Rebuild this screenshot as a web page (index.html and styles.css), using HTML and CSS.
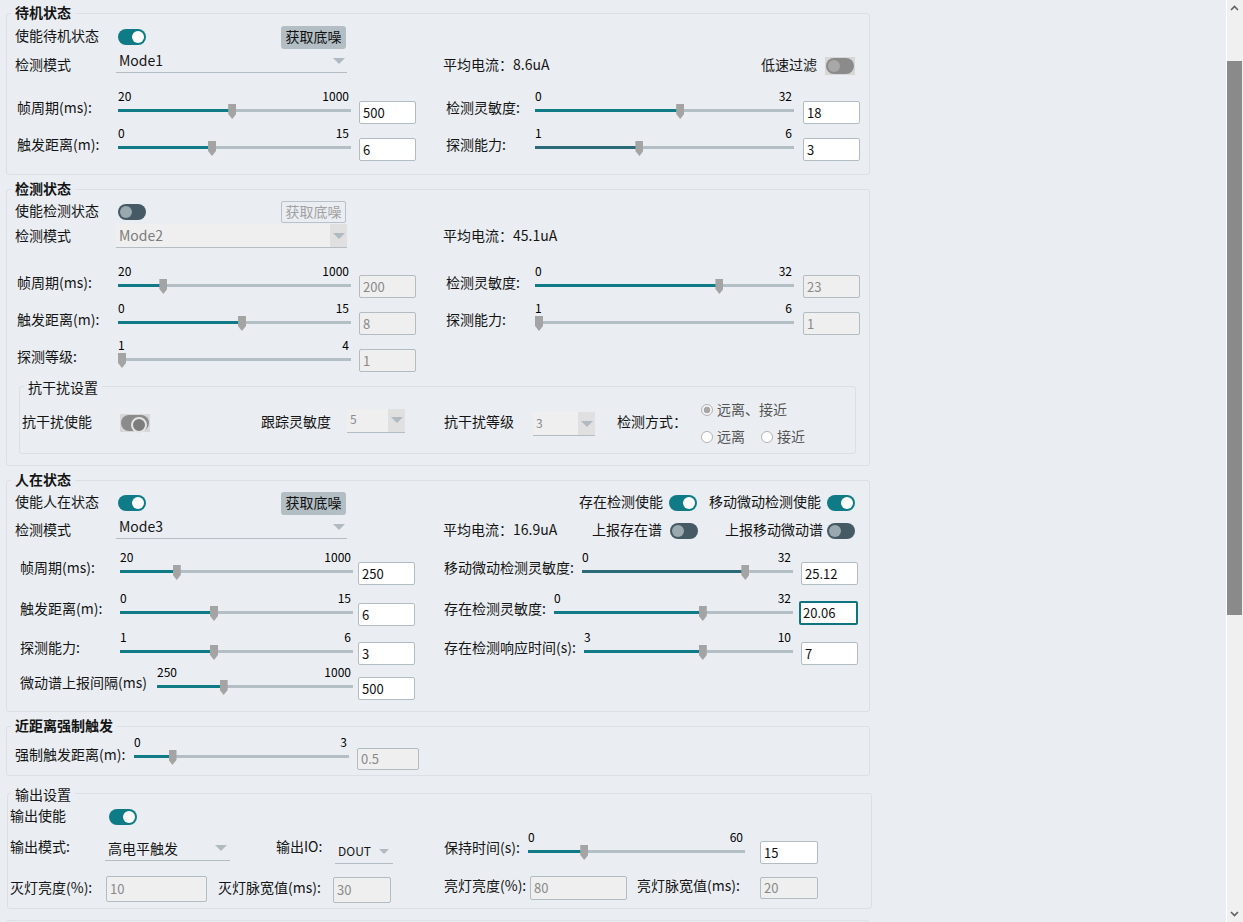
FILE: index.html
```html
<!DOCTYPE html>
<html lang="zh">
<head>
<meta charset="utf-8">
<title>设置</title>
<link rel="stylesheet" href="styles.css">
</head>
<body>
<div class="app">
<main class="content">

<section class="grp std g1">
  <h3 class="gt">待机状态</h3>
  <div class="row ra">
    <div class="lbl">使能待机状态</div>
    <div class="ctl"><span class="tgl"></span><button class="btn">获取底噪</button></div>
  </div>
  <div class="row rb">
    <div class="lbl">检测模式</div>
    <div class="combo"><span>Mode1</span><i class="arr"></i></div>
    <div class="right">
      <span>平均电流：8.6uA</span>
      <span class="push">低速过滤</span>
      <span class="tgl gray lowf"></span>
    </div>
  </div>
  <div class="row rs">
    <div class="lbl">帧周期(ms):</div>
    <div class="sl sw-l" style="--p:0.4898"><div class="tk"><span>20</span><span>1000</span></div><div class="tr"><i class="fl"></i><i class="th"></i></div></div>
    <input class="num" value="500">
    <div class="lbl2">检测灵敏度:</div>
    <div class="sl sw-r" style="--p:0.5625"><div class="tk"><span>0</span><span>32</span></div><div class="tr"><i class="fl"></i><i class="th"></i></div></div>
    <input class="num n2" value="18">
  </div>
  <div class="row rs">
    <div class="lbl">触发距离(m):</div>
    <div class="sl sw-l" style="--p:0.4"><div class="tk"><span>0</span><span>15</span></div><div class="tr"><i class="fl"></i><i class="th"></i></div></div>
    <input class="num" value="6">
    <div class="lbl2">探测能力:</div>
    <div class="sl sw-r dk" style="--p:0.4"><div class="tk"><span>1</span><span>6</span></div><div class="tr"><i class="fl"></i><i class="th"></i></div></div>
    <input class="num n2" value="3">
  </div>
</section>

<section class="grp std g2">
  <h3 class="gt">检测状态</h3>
  <div class="row ra">
    <div class="lbl">使能检测状态</div>
    <div class="ctl"><span class="tgl off"></span><button class="btn dis">获取底噪</button></div>
  </div>
  <div class="row rb">
    <div class="lbl">检测模式</div>
    <div class="combo dis"><span>Mode2</span><i class="abox"><i class="arr"></i></i></div>
    <div class="right"><span>平均电流：45.1uA</span></div>
  </div>
  <div class="row rs">
    <div class="lbl">帧周期(ms):</div>
    <div class="sl sw-l" style="--p:0.1837"><div class="tk"><span>20</span><span>1000</span></div><div class="tr"><i class="fl"></i><i class="th"></i></div></div>
    <input class="num dis" value="200" disabled>
    <div class="lbl2">检测灵敏度:</div>
    <div class="sl sw-r" style="--p:0.71875"><div class="tk"><span>0</span><span>32</span></div><div class="tr"><i class="fl"></i><i class="th"></i></div></div>
    <input class="num n2 dis" value="23" disabled>
  </div>
  <div class="row rs">
    <div class="lbl">触发距离(m):</div>
    <div class="sl sw-l" style="--p:0.5333"><div class="tk"><span>0</span><span>15</span></div><div class="tr"><i class="fl"></i><i class="th"></i></div></div>
    <input class="num dis" value="8" disabled>
    <div class="lbl2">探测能力:</div>
    <div class="sl sw-r" style="--p:0"><div class="tk"><span>1</span><span>6</span></div><div class="tr"><i class="fl"></i><i class="th"></i></div></div>
    <input class="num n2 dis" value="1" disabled>
  </div>
  <div class="row rs">
    <div class="lbl">探测等级:</div>
    <div class="sl sw-l" style="--p:0"><div class="tk"><span>1</span><span>4</span></div><div class="tr"><i class="fl"></i><i class="th"></i></div></div>
    <input class="num dis" value="1" disabled>
  </div>

  <div class="inner">
    <h4 class="gt light">抗干扰设置</h4>
    <div class="irow">
      <div class="it ilbl">抗干扰使能</div>
      <div><span class="tgl gray onr"></span></div>
      <div class="it">跟踪灵敏度</div>
      <div><div class="icombo c5"><span>5</span><i class="abox"><i class="arr"></i></i></div></div>
      <div class="it">抗干扰等级</div>
      <div><div class="icombo c3"><span>3</span><i class="abox"><i class="arr"></i></i></div></div>
      <div class="it">检测方式：</div>
      <div class="radios">
        <div class="rl"><i class="rd on"></i><span>远离、接近</span></div>
        <div class="rl"><i class="rd"></i><span>远离</span><i class="rd sp"></i><span>接近</span></div>
      </div>
    </div>
  </div>
</section>

<section class="grp g3">
  <h3 class="gt">人在状态</h3>
  <div class="row ra">
    <div class="lbl">使能人在状态</div>
    <div class="ctl"><span class="tgl"></span><button class="btn">获取底噪</button></div>
    <div class="right3">
      <span>存在检测使能</span><span class="tgl"></span>
      <span class="gap12">移动微动检测使能</span><span class="tgl"></span>
    </div>
  </div>
  <div class="row rb">
    <div class="lbl">检测模式</div>
    <div class="combo"><span>Mode3</span><i class="arr"></i></div>
    <div class="right">
      <span>平均电流：16.9uA</span>
      <span class="push">上报存在谱</span><span class="tgl off t8"></span>
      <span class="gap27">上报移动微动谱</span><span class="tgl off t4"></span>
    </div>
  </div>
  <div class="row rs rc">
    <div class="lbl lw">帧周期(ms):</div>
    <div class="sl sw-l" style="--p:0.2347"><div class="tk"><span>20</span><span>1000</span></div><div class="tr"><i class="fl"></i><i class="th"></i></div></div>
    <input class="num" value="250">
    <div class="rcell"><span class="rl">移动微动检测灵敏度:</span>
      <div class="sl dk" style="--p:0.785"><div class="tk"><span>0</span><span>32</span></div><div class="tr"><i class="fl"></i><i class="th"></i></div></div></div>
    <input class="num" value="25.12">
  </div>
  <div class="row rs rd2">
    <div class="lbl lw">触发距离(m):</div>
    <div class="sl sw-l" style="--p:0.4"><div class="tk"><span>0</span><span>15</span></div><div class="tr"><i class="fl"></i><i class="th"></i></div></div>
    <input class="num" value="6">
    <div class="rcell"><span class="rl">存在检测灵敏度:</span>
      <div class="sl" style="--p:0.6269"><div class="tk"><span>0</span><span>32</span></div><div class="tr"><i class="fl"></i><i class="th"></i></div></div></div>
    <input class="num focus" value="20.06">
  </div>
  <div class="row rs re">
    <div class="lbl lw">探测能力:</div>
    <div class="sl sw-l" style="--p:0.4"><div class="tk"><span>1</span><span>6</span></div><div class="tr"><i class="fl"></i><i class="th"></i></div></div>
    <input class="num" value="3">
    <div class="rcell"><span class="rl">存在检测响应时间(s):</span>
      <div class="sl" style="--p:0.5714"><div class="tk"><span>3</span><span>10</span></div><div class="tr"><i class="fl"></i><i class="th"></i></div></div></div>
    <input class="num" value="7">
  </div>
  <div class="row rs rf">
    <div class="lbl lwide">微动谱上报间隔(ms)</div>
    <div class="sl sw-f" style="--p:0.3333"><div class="tk"><span>250</span><span>1000</span></div><div class="tr"><i class="fl"></i><i class="th"></i></div></div>
    <input class="num" value="500">
  </div>
</section>

<section class="grp g4">
  <h3 class="gt">近距离强制触发</h3>
  <div class="row rs">
    <div class="lbl">强制触发距离(m):</div>
    <div class="sl sw-g" style="--p:0.1667"><div class="tk"><span>0</span><span>3</span></div><div class="tr"><i class="fl"></i><i class="th"></i></div></div>
    <input class="num dis" value="0.5" disabled>
  </div>
</section>

<section class="grp g5">
  <h3 class="gt light">输出设置</h3>
  <div class="row ra">
    <div class="lbl">输出使能</div>
    <span class="tgl"></span>
  </div>
  <div class="row rs rb5">
    <div class="lbl">输出模式:</div>
    <div class="combo cm"><span>高电平触发</span><i class="arr"></i></div>
    <div class="olbl">输出IO:</div>
    <div class="combo cio"><span>DOUT</span><i class="arr"></i></div>
    <div class="hlbl">保持时间(s):</div>
    <div class="sl sw-h" style="--p:0.25"><div class="tk"><span>0</span><span>60</span></div><div class="tr"><i class="fl"></i><i class="th"></i></div></div>
    <input class="num nh" value="15">
  </div>
  <div class="row rs rc5">
    <div class="lbl">灭灯亮度(%):</div>
    <input class="num dis i1" value="10" disabled>
    <div class="l2">灭灯脉宽值(ms):</div>
    <input class="num dis i2" value="30" disabled>
    <div class="l3">亮灯亮度(%):</div>
    <input class="num dis i3" value="80" disabled>
    <div class="l4">亮灯脉宽值(ms):</div>
    <input class="num dis i4" value="20" disabled>
  </div>
</section>

<section class="grp g6"></section>

</main>
<aside class="scroll">
  <div class="sbtn"><svg width="16" height="17" viewBox="0 0 16 17"><polyline points="4,10 7.5,6.5 11,10" fill="none" stroke="#606060" stroke-width="1.6"/></svg></div>
  <div class="strack"><div class="sthumb"></div></div>
  <div class="sbtn"><svg width="16" height="17" viewBox="0 0 16 17"><polyline points="4,7 7.5,10.5 11,7" fill="none" stroke="#606060" stroke-width="1.6"/></svg></div>
</aside>
</div>
</body>
</html>
```

FILE: styles.css
```css
* { box-sizing: border-box; margin: 0; padding: 0; }
html, body { width: 1243px; height: 922px; overflow: hidden; }
body {
  font-family: "Noto Sans CJK SC", "Noto Sans", sans-serif;
  font-size: 14px;
  line-height: 18px;
  color: #141414;
  background: #eaeef2;
}
button, input { font-family: inherit; }

.app { display: flex; height: 922px; }
.content { width: 1226px; flex: none; overflow: hidden; padding: 13px 0 0 6px; }

/* scrollbar */
.scroll { width: 17px; flex: none; border-left: 1px solid #ffffff; background: #f0f0f0; display: flex; flex-direction: column; }
.sbtn { height: 17px; flex: none; }
.sbtn svg { display: block; }
.strack { flex: 1; }
.sthumb { width: 15px; height: 554px; margin-top: 44px; background: #8a8a8a; }

/* group boxes */
.grp { width: 864px; border: 1px solid #dbe0e5; border-radius: 3px; }
.grp + .grp { margin-top: 14px; }
.gt {
  width: fit-content;
  height: 18px;
  margin: -10px 0 0 4px;
  padding: 0 4px;
  font-size: 14px;
  line-height: 17px;
  font-weight: 700;
  background: #eaeef2;
}
.gt.light { font-weight: 400; }

.row { display: flex; align-items: center; }
.row.rs { align-items: flex-start; }
.lbl { width: 111px; flex: none; padding-left: 8px; white-space: nowrap; }
.ctl { width: 233px; flex: none; display: flex; align-items: center; justify-content: space-between; padding-right: 5px; }

/* text in centred rows sits 2px higher, as in the original */
.ra .lbl, .rb .lbl,
.right > span:not(.tgl),
.right3 > span:not(.tgl),
.irow .it { margin-bottom: 4px; }

/* toggles */
.tgl { display: block; position: relative; flex: none; width: 28px; height: 16px; border-radius: 8px; background: #0e7b86; }
.tgl::after { content: ""; position: absolute; top: 2px; right: 2px; width: 12px; height: 12px; border-radius: 50%; background: #ffffff; }
.tgl.off { background: #455a64; }
.tgl.off::after { right: auto; left: 2px; background: #9aa8b0; }
.tgl.gray { width: 30px; height: 18px; border-radius: 0; background: #d7d7d7; }
.tgl.gray::before { content: ""; position: absolute; inset: 1px; border-radius: 8px; background: #8b8b8b; }
.tgl.gray::after { top: 3px; left: 3px; right: auto; background: #a8a8a8; }
.tgl.gray.onr::after { left: auto; right: 3px; background: #7d7d7d; border: 2px solid #e4e4e4; }

/* buttons */
.btn { width: 65px; height: 23px; border: 0; border-radius: 3px; background: #b2bdc4; color: #111; font-size: 14px; line-height: 20px; padding-bottom: 2px; }
.btn.dis { height: 22px; background: transparent; border: 1px solid #b8c1c8; color: #a2a2a2; line-height: 18px; border-radius: 2px; }

/* combos */
.combo {
  width: 231px; height: 23px; margin-left: -2px; flex: none; align-self: flex-start;
  display: flex; align-items: center; justify-content: space-between;
  padding: 0 2px 2px 3px; border-bottom: 1px solid #b4bdc4;
}
.arr { display: block; width: 0; height: 0; border-left: 6px solid transparent; border-right: 6px solid transparent; border-top: 6px solid #b1bac1; }
.combo .arr { margin-top: 1px; }
.combo.dis { height: 24px; background: #efefef; color: #7c7c7c; padding-right: 0; padding-bottom: 0; }
.combo.dis > span { margin-bottom: 2px; }
.combo.dis .arr { margin-top: 0; }
.abox { display: flex; align-items: center; justify-content: center; width: 17px; height: 100%; background: #e0e0e0; }

.right { margin-left: 96px; width: 417px; flex: none; display: flex; align-items: center; white-space: nowrap; }
.push { margin-left: auto; }
.tgl.lowf { margin: 0 5px 0 8px; }

/* sliders */
.sl { flex: none; }
.tk { display: flex; justify-content: space-between; height: 14px; font-size: 12px; line-height: 13px; padding-right: 2px; color: #000; }
.tr { position: relative; height: 3px; margin-top: 6px; background: #b4bec5; }
.fl { display: block; height: 3px; width: calc(var(--p) * (100% - 8px) + 4px); background: #0f7b86; }
.sl.dk .fl { background: #2c6a77; }
.th {
  position: absolute; top: -5px; left: calc(var(--p) * (100% - 8px));
  width: 8px; height: 15px; background: #a4a4a4;
  clip-path: polygon(0 0, 100% 0, 100% 66%, 50% 100%, 0 66%);
}

/* number inputs */
.num {
  display: block; flex: none; width: 57px; height: 23px; margin-top: 12px;
  border: 1px solid #b2bcc3; border-radius: 2px; background: #ffffff;
  padding: 0 0 1px 3px; font-size: 13px; color: #111; outline: none;
}
.num.dis { background: #efefef; color: #8a8a8a; }
.num.focus { width: 59px; height: 24px; margin-top: 10px; border: 2px solid #0e7480; padding-left: 2px; }

/* standard groups 1 & 2 */
.std .rs { height: 37px; }
.std .rs .lbl { padding-left: 10px; margin-top: 9px; }
.std .sw-l { width: 233px; }
.std .rs .num { margin-left: 8px; }
.std .lbl2 { margin-left: 27px; width: 92px; flex: none; padding-left: 3px; margin-top: 9px; }
.std .sw-r { width: 259px; }
.std .rs .num.n2 { margin-left: 9px; }

.g1 { padding-bottom: 11px; }
.g1 .ra { height: 26px; margin-top: 2px; }
.g1 .rb { height: 32px; }
.g1 .rb + .rs { margin-top: 7px; }

.g2 .ra { height: 25px; margin-top: 1px; }
.g2 .rb { height: 25px; }
.g2 .rb .combo { height: 24px; }
.g2 .rb + .rs { margin-top: 15px; }
.g2 .rs .num { margin-top: 11px; }

/* inner group */
.inner { margin: 11px 13px 11px 12px; border: 1px solid #dbe0e5; border-radius: 3px; padding-bottom: 3px; }
.inner .gt { margin-top: -8px; }
.irow {
  display: grid; height: 54px; align-items: center; margin-top: -1px;
  grid-template-columns: 100px 141px 86px 97px 89px 84px 84px 1fr;
}
.ilbl { padding-left: 2px; }
.icombo { display: flex; align-items: center; justify-content: space-between; height: 24px; background: #efefef; border-bottom: 1px solid #b4bdc4; padding-left: 3px; font-size: 12px; color: #8a8a8a; }
.icombo > span { margin-bottom: 2px; }
.icombo.c5 { width: 58px; margin-top: -5px; }
.icombo.c3 { width: 62px; margin-top: 2px; }
.radios { display: flex; flex-direction: column; }
.rl { display: flex; align-items: center; height: 27px; color: #555; }
.rl > span { margin-bottom: 2px; }
.rd { display: block; width: 12px; height: 12px; border: 1px solid #b3b3b3; border-radius: 50%; background: #ffffff; margin-right: 4px; flex: none; }
.rd.on { background: radial-gradient(circle, #a6a6a6 0 3px, #f3f3f3 3.6px); }
.rd.sp { margin-left: 16px; }

/* group 3 */
.g3 { padding-bottom: 9px; }
.g3 .ra { height: 26px; margin-top: 1px; }
.g3 .rb { height: 30px; }
.right3 { width: 509px; flex: none; display: flex; align-items: center; justify-content: flex-end; padding-right: 5px; white-space: nowrap; }
.right3 .tgl { margin-left: 6px; }
.gap12 { margin-left: 12px; }
.gap27 { margin-left: 27px; }
.tgl.t8 { margin-left: 8px; }
.tgl.t4 { margin-left: 4px; margin-right: 5px; }
.g3 .rc { height: 41px; margin-top: 4px; }
.g3 .rd2 { height: 39px; }
.g3 .re { height: 35px; }
.g3 .rf { height: 37px; }
.g3 .lw { width: 113px; padding-left: 13px; margin-top: 8px; }
.g3 .lwide { width: 150px; padding-left: 13px; margin-top: 8px; }
.g3 .sw-l { width: 233px; }
.g3 .sw-f { width: 196px; }
.g3 .rs .num { margin-left: 5px; }
.rcell { margin-left: 29px; width: 349px; flex: none; display: flex; align-items: flex-start; }
.rcell .rl { margin-top: 8px; white-space: nowrap; height: auto; color: inherit; display: block; }
.rcell .sl { flex: 1; margin-left: 8px; }
.g3 .rs .rcell + .num { margin-left: 8px; }
.g3 .rs .rcell + .num.focus { margin-left: 6px; }

/* group 4 */
.g4 { padding-bottom: 4px; }
.g4 .rs { height: 36px; }
.g4 .lbl { width: 127px; margin-top: 10px; }
.g4 .sw-g { width: 215px; }
.g4 .num { margin-left: 8px; margin-top: 13px; width: 62px; height: 22px; }

/* group 5 */
.g5 { margin-left: 1px; width: 865px; padding-bottom: 5px; }
.grp.g5 { margin-top: 17px; }
.g5 .gt { margin: -8px 0 0 3px; }
.g5 .ra { height: 26px; }
.g5 .lbl { width: 101px; padding-left: 2px; }
.g5 .rb5 { height: 35px; }
.g5 .rb5 .lbl { width: 97px; margin-top: 7px; }
.combo.cm { width: 125px; margin: 7px 0 0 0; height: 24px; padding-right: 3px; }
.olbl { margin: 7px 0 0 46px; width: 59px; flex: none; }
.combo.cio { width: 58px; margin: 10px 0 0 0; height: 24px; font-size: 12px; padding-right: 4px; }
.combo.cio .arr { border-left-width: 5px; border-right-width: 5px; border-top-width: 5px; }
.hlbl { margin: 8px 0 0 51px; width: 84px; flex: none; }
.g5 .sw-h { width: 217px; }
.num.nh { margin-left: 15px; margin-top: 11px; width: 58px; }
.g5 .rc5 { height: 38px; }
.g5 .rc5 .lbl { width: 98px; margin-top: 13px; }
.g5 .rc5 > div { margin-top: 13px; flex: none; white-space: nowrap; }
.g5 .rc5 .num { margin-top: 11px; }
.num.i1 { width: 101px; height: 26px; }
.l2 { margin-left: 11px; width: 115px; }
.num.i2 { width: 58px; height: 26px; margin-top: 12px !important; }
.l3 { margin-left: 53px; width: 86px; }
.g5 .rc5 .l3, .g5 .rc5 .l4 { margin-top: 11px; }
.num.i3 { width: 97px; height: 24px; }
.l4 { margin-left: 10px; width: 123px; }
.num.i4 { width: 58px; height: 22px; margin-top: 12px !important; }

/* group 6 */
.grp.g6 { margin-top: 11px; height: 60px; }
```
